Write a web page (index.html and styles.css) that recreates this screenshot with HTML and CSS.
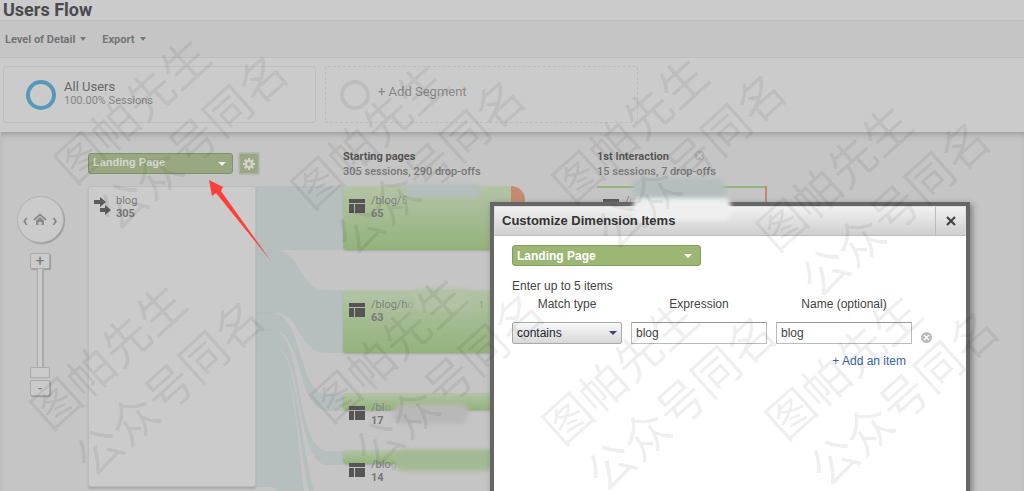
FILE: index.html
```
<!DOCTYPE html>
<html lang="en">
<head>
    <meta charset="UTF-8">
    <meta name="viewport" content="width=device-width, initial-scale=1.0">
    <title>Users Flow</title>
    <link rel="stylesheet" href="styles.css">
</head>
<body>
    <h1>Users Flow</h1>
    <div class="toolbar">
        <button class="menu">Level of Detail</button>
        <button class="menu">Export</button>
    </div>
    <div class="segments">
        <div class="segment">
            <span class="ring"></span>
            <div>
                <div class="segment-name">All Users</div>
                <div class="segment-info">100.00% Sessions</div>
            </div>
        </div>
        <button class="segment add">
            <span class="ring"></span>
            <span class="segment-name">+ Add Segment</span>
        </button>
    </div>

    <div class="flow">
        <svg class="links" width="1024" height="359" viewBox="0 132 1024 359">
            <g fill="#b6bebe">
                <path d="M256 186H343V250H256Z"/>
                <path d="M256 250H274C302 250 298 290 326 290H343V353H326C298 353 302 313 274 313H256Z"/>
                <path d="M256 313H272C304 313 296 394 328 394H343V411H328C296 411 304 330 272 330H256Z"/>
                <path d="M256 330H272C304 330 294 451 328 451H343V465H328C294 465 304 344 272 344H256Z"/>
                <path d="M256 344H272C296 344 298 430 314 491H309C296 430 294 352 272 352H256Z"/>
                <path d="M256 344H270C290 350 294 400 304 491H278Q276 487 270 487H256Z"/>
            </g>
            <path d="M256 250H274M256 313H272M256 330H272M256 344H272M570 202Q576 188 597 187" fill="none" stroke="#b0baba" opacity=".7"/>
        </svg>

        <div class="rail">
            <div class="pan">
                <button aria-label="Left">&#8249;</button>
                <button aria-label="Home">
                    <svg width="14" height="13" viewBox="0 0 14 13"><path d="M1 7L7 1.500L13 7" fill="none" stroke="#8c8c8c" stroke-width="1.800"/><path d="M3 7.500L7 4L11 7.500V12H8.500V9H5.500V12H3Z" fill="#8c8c8c"/></svg>
                </button>
                <button aria-label="Right">&#8250;</button>
            </div>
            <button class="zoom">+</button>
            <div class="track"></div>
            <div class="thumb"></div>
            <button class="zoom">-</button>
        </div>

        <div class="column">
            <div class="column-head dimension">
                <span class="dropdown"><select aria-label="Dimension"><option>Landing Page</option></select></span>
                <button class="gear" aria-label="Settings">
                    <svg width="12" height="12" viewBox="-6 -6 12 12"><circle r="3" fill="none" stroke="#d2d4cc" stroke-width="2.200"/><path d="M0-6V-3.500M0 6V3.500M-6 0H-3.500M6 0H3.500M-4.200-4.200L-2.500-2.500M4.200 4.200L2.500 2.500M-4.200 4.200L-2.500 2.500M4.200-4.200L2.500-2.500" stroke="#d2d4cc" stroke-width="2.200"/></svg>
                </button>
            </div>
            <div class="node source">
                <svg width="19" height="18" viewBox="0 0 19 18"><path d="M1 3H7V0L13 5L7 10V7H1ZM7 11H12V8L18 13L12 18V15H7Z" fill="#5c5c5c"/></svg>
                <div>blog<br><b>305</b></div>
            </div>
        </div>

        <div class="column">
            <div class="column-head"><b>Starting pages</b><br>305 sessions, 290 drop-offs</div>
            <div class="node page n65">
                <svg width="16" height="14" viewBox="0 0 16 14"><path d="M0 0H16V4H0ZM0 5H5V14H0ZM6 5H16V14H6Z" fill="#555"/></svg>
                <div>/blog/<span class="faded">5</span><br><b>65</b></div>
            </div>
            <div class="node page n63">
                <svg width="16" height="14" viewBox="0 0 16 14"><path d="M0 0H16V4H0ZM0 5H5V14H0ZM6 5H16V14H6Z" fill="#555"/></svg>
                <div>/blog/h<span class="faded">o</span><br><b>63</b></div>
                <span class="faded tail">t</span>
            </div>
            <div class="node page n17">
                <svg width="16" height="14" viewBox="0 0 16 14"><path d="M0 0H16V4H0ZM0 5H5V14H0ZM6 5H16V14H6Z" fill="#555"/></svg>
                <div>/bl<span class="faded">o</span><br><b>17</b></div>
            </div>
            <div class="node page n14">
                <svg width="16" height="14" viewBox="0 0 16 14"><path d="M0 0H16V4H0ZM0 5H5V14H0ZM6 5H16V14H6Z" fill="#555"/></svg>
                <div>/blo<span class="faded">g</span><br><b>14</b></div>
            </div>
            <span class="dropoff"></span>
            <span class="smudge s1"></span>
            <span class="smudge s2"></span>
            <span class="smudge s3"></span>
            <span class="smudge s4"></span>
        </div>

        <div class="column">
            <div class="column-head"><b>1st Interaction</b>
                <svg class="remove" width="11" height="11" viewBox="0 0 11 11"><circle cx="5.500" cy="5.500" r="5" fill="#adadad"/><path d="M3 3L8 8M8 3L3 8" stroke="#ccc" stroke-width="1.300"/></svg>
                <br>15 sessions, 7 drop-offs</div>
            <div class="node page thin">
                <svg width="16" height="14" viewBox="0 0 16 14"><path d="M0 0H16V4H0ZM0 5H5V14H0ZM6 5H16V14H6Z" fill="#555"/></svg>
                <div>/<span class="faded">c</span></div>
            </div>
            <span class="smudge s5"></span>
        </div>

        <svg class="pointer" width="64" height="84" viewBox="208 179 64 84"><path d="M209 180L223 187L221 191L271 261L216 193L212 196Z" fill="#fd3f3a"/></svg>
    </div>

    <div class="dialog" role="dialog" aria-labelledby="dialog-title">
        <div class="dialog-head">
            <span class="smudge s6"></span>
            <h2 id="dialog-title">Customize Dimension Items</h2>
            <button aria-label="Close">
                <svg width="10" height="10" viewBox="0 0 10 10"><path d="M1 1L9 9M9 1L1 9" stroke="#444" stroke-width="2.200"/></svg>
            </button>
        </div>
        <form>
            <span class="dropdown"><select aria-label="Dimension"><option>Landing Page</option></select></span>
            <p>Enter up to 5 items</p>
            <div class="items">
                <label for="match">Match type</label>
                <label for="expression">Expression</label>
                <label for="name">Name (optional)</label>
                <span></span>
                <span class="match"><select id="match"><option>contains</option></select></span>
                <input type="text" id="expression" value="blog">
                <input type="text" id="name" value="blog">
                <button type="button" class="delete" aria-label="Remove item">
                    <svg width="11" height="11" viewBox="0 0 11 11"><circle cx="5.500" cy="5.500" r="5.500" fill="#bbb"/><path d="M3 3L8 8M8 3L3 8" stroke="#fff" stroke-width="1.300"/></svg>
                </button>
            </div>
            <a href="#" class="add-item">+ Add an item</a>
        </form>
    </div>

    <div class="watermarks">
        <div>图帕先生<br>公众号同名</div>
        <div>图帕先生<br>公众号同名</div>
        <div>图帕先生<br>公众号同名</div>
        <div>图帕先生<br>公众号同名</div>
        <div>图帕先生<br>公众号同名</div>
        <div>图帕先生<br>公众号同名</div>
        <div>图帕先生<br>公众号同名</div>
        <div>图帕先生<br>公众号同名</div>
    </div>
</body>
</html>
```
FILE: styles.css
```
* {
    box-sizing: border-box;
}
body {
    position: relative;
    display: flex;
    flex-direction: column;
    min-height: 100vh;
    margin: 0;
    overflow: hidden;
    background-color: #cbcbcb;
    color: #777;
    font-family: Roboto, "Noto Sans CJK SC", sans-serif;
    font-size: 11px;
}
button {
    padding: 0;
    border: 0;
    background: none;
    color: inherit;
    font: inherit;
    cursor: pointer;
}
svg {
    display: block;
}
h1 {
    height: 21px;
    margin: 0;
    padding-left: 3px;
    border-bottom: 1px solid #bdbdbd;
    color: #4a4a4f;
    font-size: 18px;
    font-weight: 700;
    line-height: 19px;
}
.toolbar {
    display: flex;
    gap: 16px;
    height: 37px;
    padding-left: 5px;
    border-bottom: 1px solid #bebebe;
    background-color: #c5c5c5;
}
.menu {
    display: flex;
    align-items: center;
    gap: 5px;
    color: #747474;
    font-weight: 700;
}
.menu::after {
    content: "";
    border: 3px solid transparent;
    border-top: 4px solid #777;
    border-bottom: 0;
}

/* segments */
.segments {
    display: flex;
    gap: 9px;
    height: 74px;
    padding: 8px 3px;
}
.segment {
    display: flex;
    align-items: center;
    gap: 8px;
    width: 313px;
    height: 57px;
    padding-left: 22px;
    border: 1px solid #bfbfbf;
    border-radius: 3px;
    text-align: left;
}
.segment.add {
    padding-left: 14px;
    border: 1px dashed #bcbcbc;
    color: #888;
}
.ring {
    width: 30px;
    height: 30px;
    border: 4px solid #5a98ba;
    border-radius: 50%;
}
.add .ring {
    border-color: #bdbdbd;
}
.segment-name {
    color: #666;
    font-size: 13px;
    line-height: 15px;
}
.add .segment-name {
    color: #888;
    margin-bottom: 6px;
}
.segment-info {
    margin-bottom: 2px;
    color: #858585;
    line-height: 14px;
}

/* flow chart */
.flow {
    position: relative;
    display: flex;
    flex: 1;
    height: 359px;
    border-left: 1px solid #bebebe;
    background-color: #c5c5c5;
    box-shadow: inset 0 5px 6px -3px #999;
}
.links {
    position: absolute;
    left: -1px;
    top: 0;
}
.rail {
    display: flex;
    flex-direction: column;
    align-items: center;
    width: 87px;
    padding: 64px 9px 0 0;
}
.pan {
    display: flex;
    align-items: center;
    justify-content: center;
    gap: 5px;
    width: 47px;
    height: 47px;
    margin-bottom: 10px;
    border: 1px solid #b3b3b3;
    border-radius: 50%;
    background-color: #cbcbcb;
    box-shadow: 1px 1px 1px #999;
    color: #777;
    font-size: 18px;
    line-height: 18px;
}
.zoom {
    width: 20px;
    height: 16px;
    border: 1px solid #aaa;
    border-radius: 2px;
    background-color: #cbcbcb;
    box-shadow: 1px 1px 1px #999;
    font-size: 15px;
    line-height: 13px;
}
.track {
    width: 7px;
    height: 98px;
    border: 1px solid #aaa;
    border-width: 0 2px 0 1px;
    background-color: #cbcbcb;
}
.thumb {
    width: 20px;
    height: 11px;
    margin-bottom: 2px;
    border: 1px solid #aaa;
    border-radius: 2px;
    background-color: #cbcbcb;
}
.column {
    position: relative;
    width: 254px;
}
.column:nth-of-type(2) {
    width: 255px;
}
.column-head {
    height: 54px;
    padding-top: 17px;
    line-height: 15px;
    font-weight: 500;
}
.column-head b {
    color: #555;
}
.dimension {
    display: flex;
    gap: 6px;
    padding-top: 21px;
}
.dropdown {
    position: relative;
    display: block;
    width: 145px;
    height: 21px;
}
.dropdown select {
    width: 100%;
    height: 100%;
    padding: 0 4px;
    appearance: none;
    border: 1px solid #80916a;
    border-radius: 3px;
    background-color: #9aa882;
    color: #d5d8d0;
    font: bold 12px "Liberation Sans", Arial, sans-serif;
}
.dimension select {
    padding: 0 4px 3px;
    font-size: 11px;
}
.dropdown::after {
    content: "";
    position: absolute;
    top: 9px;
    right: 7px;
    border: 4px solid transparent;
    border-top-color: #eee;
    border-bottom: 0;
    pointer-events: none;
}
.gear {
    display: flex;
    align-items: center;
    justify-content: center;
    width: 20px;
    height: 21px;
    border: 1px solid #adb39f;
    border-radius: 2px;
    background-color: #9aa882;
    box-shadow: 0 0 1px 1px #b5b5b5;
}
.node {
    position: relative;
    display: flex;
    gap: 6px;
    width: 168px;
    padding: 8px 6px 0;
    border-radius: 3px;
    line-height: 13px;
    color: #808080;
}
.node svg {
    flex: none;
}
.node b {
    color: #777;
}
.source {
    height: 301px;
    padding: 7px 4px 0;
    gap: 4px;
    border: 1px solid #bbb;
    background-color: #cbcbcb;
    box-shadow: 0 2px 2px #aaa;
}
.source svg {
    margin-top: 3px;
}
.page {
    margin-bottom: 40px;
    background: linear-gradient(#b4c4a7, #93b27b);
    box-shadow: 0 1px 2px #a5a5a5;
}
.page svg {
    margin-top: 5px;
}
.n65 {
    height: 64px;
}
.n63 {
    height: 63px;
}
.n17 {
    height: 17px;
}
.n14 {
    height: 14px;
}
.thin {
    width: 170px;
    height: 20px;
    border-right: 2px solid #c98567;
    border-radius: 0;
    background: linear-gradient(#92b57a, #92b57a) top / 100% 2px no-repeat;
    box-shadow: none;
}
.faded {
    opacity: .4;
}
.tail {
    margin-left: 60px;
}
.dropoff {
    position: absolute;
    left: 168px;
    top: 54px;
    width: 14px;
    height: 18px;
    border-radius: 0 14px 0 0;
    background-color: #c58a6f;
}
.remove {
    position: absolute;
    left: 97px;
    top: 18px;
}
.pointer {
    position: absolute;
    left: 207px;
    top: 47px;
}

/* hidden parts of the page paths */
.smudge {
    position: absolute;
    border-radius: 8px;
    filter: blur(2px);
}
.s1 {
    left: 62px;
    top: 52px;
    width: 76px;
    height: 13px;
    background-color: #b3bebd;
}
.s2 {
    left: 70px;
    top: 157px;
    width: 58px;
    height: 22px;
    background-color: #b2c2a4;
}
.s3 {
    left: 51px;
    top: 272px;
    width: 74px;
    height: 20px;
    background-color: #b8b8b8;
}
.s4 {
    left: 52px;
    top: 318px;
    width: 98px;
    height: 21px;
    background-color: #a3b994;
}
.s5 {
    left: 36px;
    top: 46px;
    width: 92px;
    height: 22px;
    background-color: #b3bebd;
}
.s6 {
    left: 138px;
    top: -9px;
    width: 98px;
    height: 22px;
    background-color: #efefef;
}

/* dialog */
.dialog {
    position: absolute;
    top: 202px;
    bottom: 0;
    left: 490px;
    width: 480px;
    border: 4px solid #666;
    border-bottom: 0;
    background-color: #fff;
    box-shadow: 2px 2px 6px #777;
    color: #444;
    font-family: "Liberation Sans", Arial, sans-serif;
    font-size: 12px;
}
.dialog-head {
    position: relative;
    display: flex;
    height: 30px;
    border: 1px solid #ddd;
    border-bottom-color: #bbb;
    background: linear-gradient(#f1f1f1, #cfcfcf);
}
.dialog-head h2 {
    position: relative;
    flex: 1;
    margin: 0;
    padding-left: 7px;
    color: #333;
    font-size: 13px;
    line-height: 28px;
}
.dialog-head button {
    display: flex;
    align-items: center;
    justify-content: center;
    width: 30px;
    border-left: 1px solid #bbb;
}
form {
    padding: 9px 0 0 18px;
}
form .dropdown {
    width: 189px;
}
form .dropdown select {
    border-color: #84a05c;
    background-color: #9cb674;
    color: #fff;
}
form .dropdown::after {
    right: 9px;
    border-top-color: #fff;
}
form p {
    margin: 12px 0 3px;
    line-height: 16px;
}
.items {
    display: grid;
    grid-template-columns: 110px 136px 136px 11px;
    gap: 10px 9px;
    align-items: center;
    line-height: 15px;
}
.items label {
    text-align: center;
}
.match {
    position: relative;
    height: 22px;
}
.match::after {
    content: "";
    position: absolute;
    top: 9px;
    right: 5px;
    border: 4px solid transparent;
    border-top-color: #3a4580;
    border-bottom: 0;
    pointer-events: none;
}
.match select,
.items input {
    width: 100%;
    height: 22px;
    padding: 0 4px;
    border: 1px solid #bbb;
    border-top-color: #999;
    border-radius: 0;
    background-color: #fff;
    color: #444;
    font: 12px "Liberation Sans", Arial, sans-serif;
}
.match select {
    appearance: none;
    border-color: #aaa;
    border-radius: 2px;
    background: linear-gradient(#f8f8f8, #d8d8d8);
    color: #223;
}
.delete {
    margin-top: 8px;
}
.add-item {
    display: block;
    width: 394px;
    margin-top: 10px;
    color: #3c639c;
    line-height: 15px;
    text-align: right;
    text-decoration: none;
}

/* repeated diagonal mark, turned about its first character */
.watermarks {
    position: absolute;
    inset: 0;
    overflow: hidden;
    pointer-events: none;
}
.watermarks div {
    position: absolute;
    color: rgba(0, 0, 0, .08);
    font-family: "Noto Sans CJK SC", sans-serif;
    font-size: 47px;
    line-height: 64px;
    white-space: nowrap;
    transform: rotate(-42deg);
    transform-origin: 23px 32px;
}
.watermarks div:nth-child(1) {
    left: 55px;
    top: 124px;
}
.watermarks div:nth-child(2) {
    left: 292px;
    top: 149px;
}
.watermarks div:nth-child(3) {
    left: 553px;
    top: 143px;
}
.watermarks div:nth-child(4) {
    left: 757px;
    top: 191px;
}
.watermarks div:nth-child(5) {
    left: 31px;
    top: 370px;
}
.watermarks div:nth-child(6) {
    left: 311px;
    top: 363px;
}
.watermarks div:nth-child(7) {
    left: 543px;
    top: 385px;
}
.watermarks div:nth-child(8) {
    left: 766px;
    top: 380px;
}
```
